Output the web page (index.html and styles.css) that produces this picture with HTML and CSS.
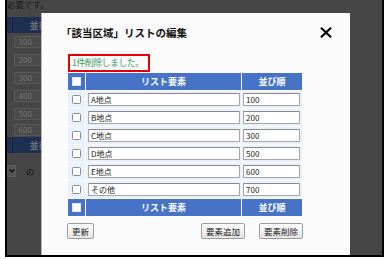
FILE: index.html
```html
<!DOCTYPE html>
<html lang="ja">
<head>
    <meta charset="UTF-8">
    <title>リストの編集</title>
    <link rel="stylesheet" href="styles.css">
</head>
<body>

    <div class="frame">
        <!-- Page behind the dialog -->
        <div class="page">
            <p class="lead">必要です。</p>
            <table class="bg-table">
                <tr class="bg-head"><th class="bg-mark"></th><th>並び順</th></tr>
                <tr><td class="bg-mark"></td><td><span class="bg-input">100</span></td></tr>
                <tr><td class="bg-mark"></td><td><span class="bg-input">200</span></td></tr>
                <tr><td class="bg-mark"></td><td><span class="bg-input">300</span></td></tr>
                <tr><td class="bg-mark"></td><td><span class="bg-input">400</span></td></tr>
                <tr><td class="bg-mark"></td><td><span class="bg-input">500</span></td></tr>
                <tr class="short"><td class="bg-mark"></td><td><span class="bg-input">600</span></td></tr>
                <tr class="bg-head"><th class="bg-mark"></th><th>並び順</th></tr>
            </table>
            <div class="bg-select">
                <span class="bg-sel">
                    <svg width="6" height="4" viewBox="0 0 6 4"><path d="M0.5 0.5 L3 3 L5.5 0.5" fill="none" stroke="#111" stroke-width="1.2"/></svg>
                </span>
                <span class="bg-no">の</span>
                <span class="bg-box"></span>
            </div>
        </div>

        <div class="overlay"></div>

        <!-- Dialog -->
        <div class="modal">
            <div class="modal-head">
                <h2 class="modal-title">「該当区域」リストの編集</h2>
                <span class="close">
                    <svg width="12" height="11" viewBox="0 0 12 11"><path d="M1 0.8 L11 10.2 M11 0.8 L1 10.2" stroke="#000" stroke-width="2.2" fill="none"/></svg>
                </span>
            </div>

            <p class="msg">1件削除しました。</p>

            <table class="list">
                <tr class="head">
                    <th class="col-cb"><input type="checkbox" class="cb cb-head"></th>
                    <th class="col-name">リスト要素</th>
                    <th class="col-order">並び順</th>
                </tr>
                <tr>
                    <td><input type="checkbox" class="cb"></td>
                    <td><input type="text" class="name" value="A地点"></td>
                    <td><input type="text" class="order" value="100"></td>
                </tr>
                <tr>
                    <td><input type="checkbox" class="cb"></td>
                    <td><input type="text" class="name" value="B地点"></td>
                    <td><input type="text" class="order" value="200"></td>
                </tr>
                <tr>
                    <td><input type="checkbox" class="cb"></td>
                    <td><input type="text" class="name" value="C地点"></td>
                    <td><input type="text" class="order" value="300"></td>
                </tr>
                <tr>
                    <td><input type="checkbox" class="cb"></td>
                    <td><input type="text" class="name" value="D地点"></td>
                    <td><input type="text" class="order" value="500"></td>
                </tr>
                <tr>
                    <td><input type="checkbox" class="cb"></td>
                    <td><input type="text" class="name" value="E地点"></td>
                    <td><input type="text" class="order" value="600"></td>
                </tr>
                <tr>
                    <td><input type="checkbox" class="cb"></td>
                    <td><input type="text" class="name" value="その他"></td>
                    <td><input type="text" class="order" value="700"></td>
                </tr>
                <tr class="head">
                    <th><input type="checkbox" class="cb cb-head"></th>
                    <th>リスト要素</th>
                    <th>並び順</th>
                </tr>
            </table>

            <div class="actions">
                <button class="btn">更新</button>
                <div class="actions-right">
                    <button class="btn">要素追加</button>
                    <button class="btn">要素削除</button>
                </div>
            </div>
        </div>
    </div>

</body>
</html>
```

FILE: styles.css
```css
/* General */
body {
    margin: 0;
    background-color: #fff;
    font-family: "Noto Sans CJK JP", "Noto Sans", sans-serif;
    color: #222;
}

.frame {
    position: relative;
    margin-left: 5px;
    width: 375px;
    height: 255px;
    border: 2px solid #000;
    border-top: 0;
    overflow: hidden;
    background-color: #808080;
}

/* Page behind the dialog */
.lead {
    margin: 0;
    font-size: 8.5px;
    line-height: 9px;
    color: #333;
}

.bg-table {
    margin-top: 8px;
    border-collapse: collapse;
}

.bg-table td, .bg-table th {
    padding: 0;
    height: 18px;
    vertical-align: middle;
}

.bg-table .short td {
    height: 14px;
}

.bg-mark {
    width: 5px;
}

.bg-head th {
    height: 16px;
    background-color: #3a5796;
    color: #c8cfdc;
    font-size: 9px;
    font-weight: bold;
    text-align: center;
    width: 60px;
    border-left: 1px solid #2a3f70;
}

.bg-head th.bg-mark {
    width: 5px;
    border-left: 0;
}

.bg-table td:last-child {
    padding-left: 1px;
}

.bg-input {
    display: block;
    width: 50px;
    height: 10px;
    line-height: 10px;
    padding-left: 4px;
    font-size: 8px;
    color: #d6d6d6;
    background-color: #878787;
    border: 1px solid #a4a4a4;
}

.bg-select {
    display: flex;
    align-items: center;
    margin-top: 12px;
    height: 12px;
}

.bg-sel {
    display: flex;
    align-items: center;
    justify-content: center;
    width: 7px;
    height: 10px;
    background-color: #9a9a9a;
    border: 1px solid #aaa;
}

.bg-no {
    margin-left: 10px;
    font-size: 8px;
    color: #222;
}

.bg-box {
    margin-left: 8px;
    width: 10px;
    height: 10px;
    background-color: #8a8a8a;
    border: 1px solid #a4a4a4;
}

.overlay {
    position: absolute;
    top: 0;
    left: 0;
    right: 0;
    bottom: 0;
    background-color: rgba(0, 0, 0, 0.45);
}

/* Dialog */
.modal {
    position: absolute;
    left: 35px;
    top: 13px;
    bottom: 0;
    width: 308px;
    box-sizing: border-box;
    padding: 12px 18px 0 25px;
    background-color: #fbfbfb;
    box-shadow: -1px 0 0 #b5b5b5;
}

.modal-head {
    display: flex;
    justify-content: space-between;
    align-items: center;
    height: 15px;
    margin-left: -6px;
}

.modal-title {
    margin: 0;
    font-size: 10.5px;
    font-weight: bold;
    color: #111;
}

.close {
    display: flex;
    cursor: pointer;
}

.msg {
    display: inline-block;
    margin: 14px 0 0 1px;
    padding: 0 4px 0 2px;
    height: 14px;
    line-height: 14px;
    border: 2px solid #e60000;
    font-size: 9px;
    letter-spacing: -0.6px;
    color: #3f9a64;
}

.list {
    width: 236px;
    margin-top: 0;
    border-collapse: separate;
    border-spacing: 1px;
    table-layout: fixed;
}

.list th, .list td {
    height: 17px;
    padding: 0;
    background-color: #e9f1fc;
    vertical-align: middle;
}

.list .head th {
    background-color: #4673c5;
    color: #fff;
    font-size: 9px;
    font-weight: bold;
    text-align: center;
}

.col-cb {
    width: 17px;
}

.col-order {
    width: 60px;
}

.list td:first-child, .list th:first-child {
    text-align: center;
}

.cb {
    appearance: none;
    display: block;
    margin: 0 auto;
    width: 9px;
    height: 9px;
    border: 1px solid #8c8c8c;
    border-radius: 1.5px;
    background-color: #fff;
}

.cb-head {
    border-color: #e0e6f2;
    border-radius: 0;
}

.name, .order {
    display: block;
    box-sizing: border-box;
    height: 13px;
    padding: 0 2px;
    border: 1px solid #a6a6a6;
    border-top-color: #8a8a8a;
    border-radius: 1px;
    background-color: #fff;
    font-family: "Noto Sans CJK JP", "Noto Sans", sans-serif;
    font-size: 8px;
    color: #222;
}

.name {
    width: 152px;
    margin-left: 2px;
}

.order {
    width: 57px;
    margin-left: 1px;
}

/* Buttons */
.actions {
    display: flex;
    justify-content: space-between;
    margin-top: 6px;
    width: 236px;
}

.actions-right {
    display: flex;
    gap: 14px;
}

.btn {
    height: 16px;
    padding: 0 4px;
    border: 1px solid #9d9d9d;
    border-radius: 2px;
    background: linear-gradient(#fefefe, #e4e4e4);
    font-family: "Noto Sans CJK JP", "Noto Sans", sans-serif;
    font-size: 8.5px;
    line-height: 14px;
    color: #222;
    cursor: pointer;
}
```
